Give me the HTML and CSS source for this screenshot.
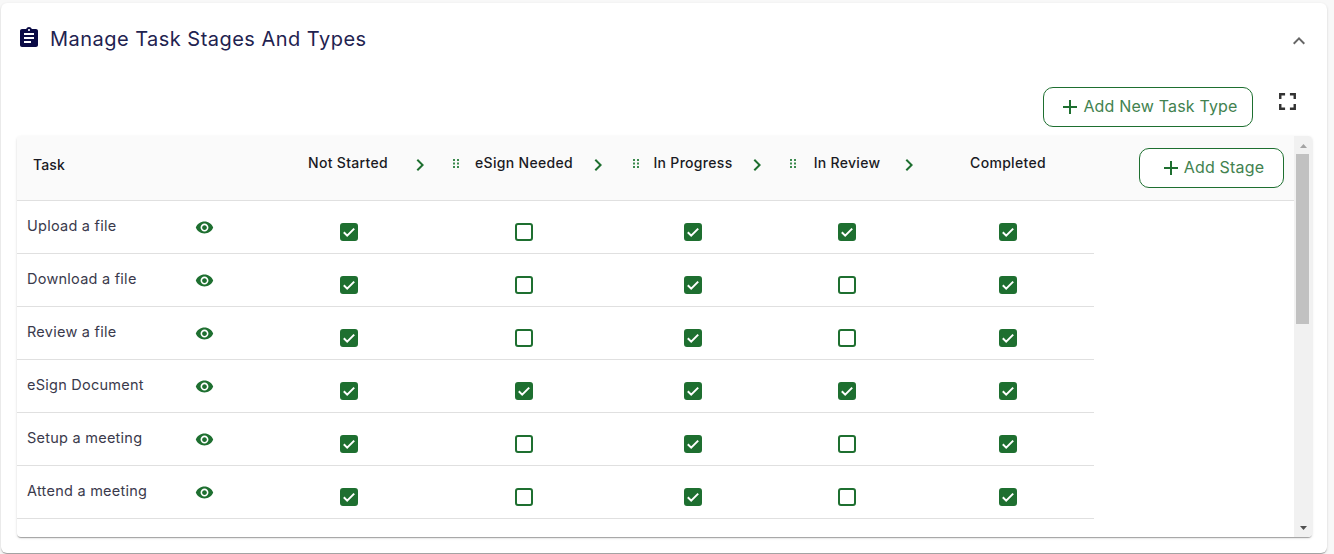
FILE: index.html
```html
<!DOCTYPE html>
<html lang="en">
<head>
<meta charset="utf-8">
<title>Manage Task Stages And Types</title>
<link rel="stylesheet" href="styles.css">
</head>
<body>
<section class="card">
  <header class="card-head">
    <svg class="icon-title" viewBox="0 0 24 24"><path d="M19 3h-4.18C14.4 1.84 13.3 1 12 1c-1.3 0-2.4.84-2.82 2H5c-1.1 0-2 .9-2 2v14c0 1.1.9 2 2 2h14c1.1 0 2-.9 2-2V5c0-1.1-.9-2-2-2zm-7 0c.55 0 1 .45 1 1s-.45 1-1 1-1-.45-1-1 .45-1 1-1zm2 14H7v-2h7v2zm3-4H7v-2h10v2zm0-4H7V7h10v2z"/></svg>
    <h1 class="title">Manage Task Stages And Types</h1>
    <svg class="icon-collapse" viewBox="0 0 24 24"><path d="M7.41 15.41L12 10.83l4.59 4.58L18 14l-6-6-6 6z"/></svg>
  </header>
  <div class="actions">
    <button class="btn btn-type"><svg class="plus" viewBox="0 0 14 14"><path d="M6 0h2v6h6v2H8v6H6V8H0V6h6z"/></svg><span>Add New Task Type</span></button>
    <svg class="icon-full" viewBox="0 0 24 24"><path d="M7 14H5v5h5v-2H7v-3zm-2-4h2V7h3V5H5v5zm12 7h-3v2h5v-5h-2v3zM14 5v2h3v3h2V5h-5z"/></svg>
  </div>
  <div class="table-box">
    <div class="table-view">
      <div class="thead">
        <div class="th th-task">Task</div>
        <div class="th">Not Started</div>
        <svg class="chev" viewBox="0 0 24 24"><path d="M8.59 16.59L13.17 12 8.59 7.41 10 6l6 6-6 6z"/></svg>
        <div class="drag"><svg viewBox="0 0 6 9"><path d="M0 0h2v2H0zM4 0h2v2H4zM0 3.5h2v2H0zM4 3.5h2v2H4zM0 7h2v2H0zM4 7h2v2H4z"/></svg></div>
        <div class="th">eSign Needed</div>
        <svg class="chev" viewBox="0 0 24 24"><path d="M8.59 16.59L13.17 12 8.59 7.41 10 6l6 6-6 6z"/></svg>
        <div class="drag"><svg viewBox="0 0 6 9"><path d="M0 0h2v2H0zM4 0h2v2H4zM0 3.5h2v2H0zM4 3.5h2v2H4zM0 7h2v2H0zM4 7h2v2H4z"/></svg></div>
        <div class="th">In Progress</div>
        <svg class="chev" viewBox="0 0 24 24"><path d="M8.59 16.59L13.17 12 8.59 7.41 10 6l6 6-6 6z"/></svg>
        <div class="drag"><svg viewBox="0 0 6 9"><path d="M0 0h2v2H0zM4 0h2v2H4zM0 3.5h2v2H0zM4 3.5h2v2H4zM0 7h2v2H0zM4 7h2v2H4z"/></svg></div>
        <div class="th">In Review</div>
        <svg class="chev" viewBox="0 0 24 24"><path d="M8.59 16.59L13.17 12 8.59 7.41 10 6l6 6-6 6z"/></svg>
        <div class="th">Completed</div>
        <div class="th-add"><button class="btn btn-stage"><svg class="plus" viewBox="0 0 14 14"><path d="M6 0h2v6h6v2H8v6H6V8H0V6h6z"/></svg><span>Add Stage</span></button></div>
      </div>

      <div class="row">
        <div class="task"><span class="task-name">Upload a file</span><svg class="eye" viewBox="0 0 24 24"><path d="M12 4.5C7 4.5 2.73 7.61 1 12c1.73 4.39 6 7.5 11 7.5s9.27-3.11 11-7.5c-1.73-4.39-6-7.5-11-7.5zM12 17c-2.76 0-5-2.24-5-5s2.24-5 5-5 5 2.24 5 5-2.24 5-5 5zm0-8c-1.66 0-3 1.34-3 3s1.34 3 3 3 3-1.34 3-3-1.34-3-3-3z"/></svg></div>
        <div class="cell"><input type="checkbox" checked></div>
        <div class="cell"><input type="checkbox"></div>
        <div class="cell"><input type="checkbox" checked></div>
        <div class="cell"><input type="checkbox" checked></div>
        <div class="cell"><input type="checkbox" checked></div>
      </div>
      <div class="row">
        <div class="task"><span class="task-name">Download a file</span><svg class="eye" viewBox="0 0 24 24"><path d="M12 4.5C7 4.5 2.73 7.61 1 12c1.73 4.39 6 7.5 11 7.5s9.27-3.11 11-7.5c-1.73-4.39-6-7.5-11-7.5zM12 17c-2.76 0-5-2.24-5-5s2.24-5 5-5 5 2.24 5 5-2.24 5-5 5zm0-8c-1.66 0-3 1.34-3 3s1.34 3 3 3 3-1.34 3-3-1.34-3-3-3z"/></svg></div>
        <div class="cell"><input type="checkbox" checked></div>
        <div class="cell"><input type="checkbox"></div>
        <div class="cell"><input type="checkbox" checked></div>
        <div class="cell"><input type="checkbox"></div>
        <div class="cell"><input type="checkbox" checked></div>
      </div>
      <div class="row">
        <div class="task"><span class="task-name">Review a file</span><svg class="eye" viewBox="0 0 24 24"><path d="M12 4.5C7 4.5 2.73 7.61 1 12c1.73 4.39 6 7.5 11 7.5s9.27-3.11 11-7.5c-1.73-4.39-6-7.5-11-7.5zM12 17c-2.76 0-5-2.24-5-5s2.24-5 5-5 5 2.24 5 5-2.24 5-5 5zm0-8c-1.66 0-3 1.34-3 3s1.34 3 3 3 3-1.34 3-3-1.34-3-3-3z"/></svg></div>
        <div class="cell"><input type="checkbox" checked></div>
        <div class="cell"><input type="checkbox"></div>
        <div class="cell"><input type="checkbox" checked></div>
        <div class="cell"><input type="checkbox"></div>
        <div class="cell"><input type="checkbox" checked></div>
      </div>
      <div class="row">
        <div class="task"><span class="task-name">eSign Document</span><svg class="eye" viewBox="0 0 24 24"><path d="M12 4.5C7 4.5 2.73 7.61 1 12c1.73 4.39 6 7.5 11 7.5s9.27-3.11 11-7.5c-1.73-4.39-6-7.5-11-7.5zM12 17c-2.76 0-5-2.24-5-5s2.24-5 5-5 5 2.24 5 5-2.24 5-5 5zm0-8c-1.66 0-3 1.34-3 3s1.34 3 3 3 3-1.34 3-3-1.34-3-3-3z"/></svg></div>
        <div class="cell"><input type="checkbox" checked></div>
        <div class="cell"><input type="checkbox" checked></div>
        <div class="cell"><input type="checkbox" checked></div>
        <div class="cell"><input type="checkbox" checked></div>
        <div class="cell"><input type="checkbox" checked></div>
      </div>
      <div class="row">
        <div class="task"><span class="task-name">Setup a meeting</span><svg class="eye" viewBox="0 0 24 24"><path d="M12 4.5C7 4.5 2.73 7.61 1 12c1.73 4.39 6 7.5 11 7.5s9.27-3.11 11-7.5c-1.73-4.39-6-7.5-11-7.5zM12 17c-2.76 0-5-2.24-5-5s2.24-5 5-5 5 2.24 5 5-2.24 5-5 5zm0-8c-1.66 0-3 1.34-3 3s1.34 3 3 3 3-1.34 3-3-1.34-3-3-3z"/></svg></div>
        <div class="cell"><input type="checkbox" checked></div>
        <div class="cell"><input type="checkbox"></div>
        <div class="cell"><input type="checkbox" checked></div>
        <div class="cell"><input type="checkbox"></div>
        <div class="cell"><input type="checkbox" checked></div>
      </div>
      <div class="row">
        <div class="task"><span class="task-name">Attend a meeting</span><svg class="eye" viewBox="0 0 24 24"><path d="M12 4.5C7 4.5 2.73 7.61 1 12c1.73 4.39 6 7.5 11 7.5s9.27-3.11 11-7.5c-1.73-4.39-6-7.5-11-7.5zM12 17c-2.76 0-5-2.24-5-5s2.24-5 5-5 5 2.24 5 5-2.24 5-5 5zm0-8c-1.66 0-3 1.34-3 3s1.34 3 3 3 3-1.34 3-3-1.34-3-3-3z"/></svg></div>
        <div class="cell"><input type="checkbox" checked></div>
        <div class="cell"><input type="checkbox"></div>
        <div class="cell"><input type="checkbox" checked></div>
        <div class="cell"><input type="checkbox"></div>
        <div class="cell"><input type="checkbox" checked></div>
      </div>
    </div>
    <div class="scrollbar">
      <div class="sb-btn sb-up"><svg viewBox="0 0 7 4"><path d="M3.5 0L7 4H0z"/></svg></div>
      <div class="sb-thumb"></div>
      <div class="sb-btn sb-down"><svg viewBox="0 0 7 4"><path d="M0 0h7L3.5 4z"/></svg></div>
    </div>
  </div>
</section>
</body>
</html>
```

FILE: styles.css
```css
* { box-sizing: border-box; }
html, body { margin: 0; height: 554px; overflow: hidden; }
body {
  padding: 3px 7px 0 1px;
  background: #f8f8f8;
  font-family: "Inter", "Liberation Sans", sans-serif;
  color: #1c1c1c;
}
.card {
  height: 550px;
  padding: 0 15px 0 16px;
  background: #fff;
  border-radius: 6px;
  box-shadow: 0 2px 1px -1px rgba(0,0,0,.2), 0 1px 1px rgba(0,0,0,.14), 0 1px 3px rgba(0,0,0,.12);
}
.card-head { height: 72px; display: flex; align-items: center; padding-right: 1px; }
.icon-title { width: 24px; height: 24px; margin-right: 9px; margin-top: -2px; fill: #0b0b45; flex: none; }
.title { margin: 0; font-size: 20px; font-weight: 400; letter-spacing: .47px; color: #1f2350; flex: 1; }
.icon-collapse { width: 24px; height: 24px; fill: #666; margin-top: 4px; flex: none; }
.actions { margin-top: 12px; height: 40px; display: flex; justify-content: flex-end; align-items: flex-start; padding-right: 10px; }
.btn {
  height: 40px;
  display: flex;
  align-items: center;
  justify-content: center;
  gap: 6px;
  background: #fff;
  border: 1px solid #1e6f30;
  border-radius: 10px;
  color: #42824f;
  font: 400 16px "Inter", "Liberation Sans", sans-serif;
  letter-spacing: .18px;
  padding: 0 0 2px 5px;
}
.btn .plus { margin-top: 2px; }
.btn-type { width: 210px; }
.btn-stage { width: 145px; }
.plus { width: 14px; height: 14px; fill: #1e6f30; flex: none; }
.icon-full { width: 29px; height: 29px; fill: #333; margin: 0 0 0 20px; flex: none; }
.table-box {
  margin-top: 9px;
  height: 401px;
  display: flex;
  border-radius: 4px;
  overflow: hidden;
  box-shadow: 0 2px 1px -1px rgba(0,0,0,.2), 0 1px 1px rgba(0,0,0,.14), 0 1px 3px rgba(0,0,0,.12);
}
.table-view { flex: 1; min-width: 0; overflow: hidden; }
.scrollbar {
  width: 18px;
  flex: none;
  display: flex;
  flex-direction: column;
  align-items: center;
  background: #f1f1f1;
}
.sb-btn { width: 100%; height: 18px; display: flex; justify-content: center; flex: none; }
.sb-btn svg { width: 7px; height: 4px; }
.sb-up { align-items: flex-start; padding-top: 8px; }
.sb-up svg { fill: #a3a3a3; }
.sb-down { align-items: flex-end; padding-bottom: 7px; margin-top: auto; }
.sb-down svg { fill: #505050; }
.sb-thumb { width: 13px; height: 170px; background: #c1c1c1; margin-right: 1px; }
.thead {
  height: 65px;
  display: grid;
  grid-template-columns: 267px 128px 16px 33px 126px 22px 32px 104px 24px 29px 98px 26px 172px 1fr;
  align-items: center;
  background: #fafafa;
  border-bottom: 1px solid #e0e0e0;
}
.th { font-size: 14px; font-weight: 500; letter-spacing: .3px; text-align: center; padding-bottom: 12px; white-space: nowrap; color: #1a1a24; }
.th-task { text-align: left; padding: 0 0 8px 16px; letter-spacing: .1px; }
.chev { width: 24px; height: 24px; fill: #1e6f30; justify-self: center; margin-bottom: 6px; }
.drag { display: flex; justify-content: flex-end; padding-bottom: 9px; }
.drag svg { width: 6px; height: 9px; fill: #3c8a4e; margin-right: 2px; }
.th-add { display: flex; justify-content: flex-end; padding-right: 10px; }
.row {
  width: 1077px;
  height: 53px;
  display: grid;
  grid-template-columns: 253px 158px 192px 146px 162px 160px 6px;
  align-items: center;
  border-bottom: 1px solid #e0e0e0;
}
.task { display: flex; align-items: center; padding-left: 10px; }
.task-name { width: 168px; font-size: 14.5px; letter-spacing: .25px; color: #3a3a4c; padding-bottom: 3px; white-space: nowrap; }
.eye { width: 19px; height: 19px; fill: #1e6f30; flex: none; margin-top: 1px; }
.cell { display: flex; justify-content: center; padding-top: 9px; }
input[type="checkbox"] {
  appearance: none;
  -webkit-appearance: none;
  margin: 0;
  width: 18px;
  height: 18px;
  border: 2px solid #1e6f30;
  border-radius: 3px;
  background: #fff;
}
input[type="checkbox"]:checked {
  background: #1e6f30 url("data:image/svg+xml,%3Csvg xmlns='http://www.w3.org/2000/svg' viewBox='0 0 14 14'%3E%3Cpath d='M1.8 7.2l3.4 3.4 7-7' fill='none' stroke='%23fff' stroke-width='2'/%3E%3C/svg%3E") center / 14px 14px no-repeat;
}
```
